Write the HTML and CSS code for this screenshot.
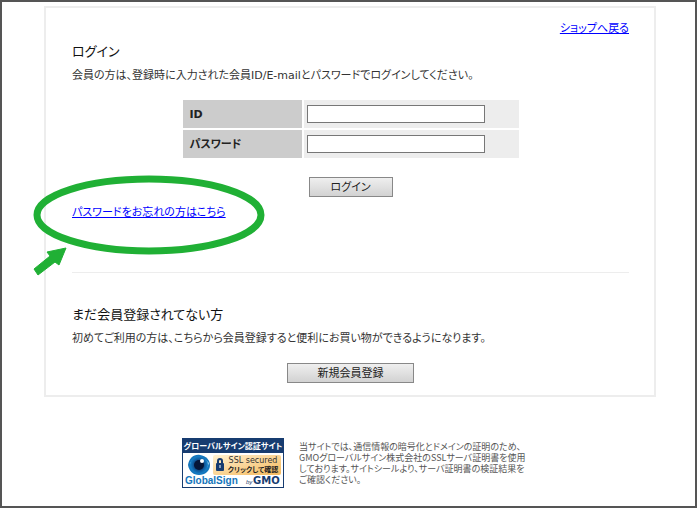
FILE: index.html
```html
<!DOCTYPE html>
<html lang="ja">
<head>
<meta charset="utf-8">
<title>ログイン</title>
<link rel="stylesheet" href="styles.css">
</head>
<body>
<div class="page">
  <main class="card">
    <nav class="back"><a href="#">ショップへ戻る</a></nav>
    <section class="login">
      <h1>ログイン</h1>
      <p>会員の方は、登録時に入力された会員ID/E-mailとパスワードでログインしてください。</p>
      <form>
        <table class="fields">
          <tr>
            <th scope="row"><label for="user">ID</label></th>
            <td><input id="user" type="text"></td>
          </tr>
          <tr>
            <th scope="row"><label for="pass">パスワード</label></th>
            <td><input id="pass" type="password"></td>
          </tr>
        </table>
        <button class="btn" type="button">ログイン</button>
      </form>
      <div class="forgot">
        <a href="#">パスワードをお忘れの方はこちら</a>
        <svg class="callout" width="234" height="104" viewBox="0 0 234 104" aria-hidden="true">
          <ellipse cx="117" cy="42" rx="112" ry="36" fill="none" stroke="#20b035" stroke-width="7"/>
          <path d="M34 75 15 79 18 83 2 96 6 102 23 89 27 92Z" fill="#20b035" stroke="#20b035"/>
        </svg>
      </div>
    </section>
    <section class="signup">
      <h2>まだ会員登録されてない方</h2>
      <p>初めてご利用の方は、こちらから会員登録すると便利にお買い物ができるようになります。</p>
      <button class="btn btn-wide" type="button">新規会員登録</button>
    </section>
  </main>
  <footer class="seal">
    <a href="#" aria-label="GlobalSign">
      <svg class="badge" width="102" height="50" viewBox="0 0 102 50">
        <defs>
          <linearGradient id="gold" x1="0" y1="0" x2="1" y2="1">
            <stop offset="0" stop-color="#fff1d2"/>
            <stop offset="1" stop-color="#f5b95b"/>
          </linearGradient>
          <radialGradient id="iris">
            <stop offset="0" stop-color="#071c44"/>
            <stop offset=".4" stop-color="#0b3c78"/>
            <stop offset="1" stop-color="#1682cc"/>
          </radialGradient>
        </defs>
        <rect x=".5" y=".5" width="101" height="49" fill="#fff" stroke="#173c70"/>
        <rect width="102" height="15" fill="#173c70"/>
        <text class="badge-title" x="51" y="11" text-anchor="middle">グローバルサイン認証サイト</text>
        <path d="M6 27C7 20 12 16 18 17 24 18 28 22 28 27 28 33 23 37 17 37 11 37 7 33 6 27Z" fill="#1475bb"/>
        <path d="M8 25C12 19 21 18 27 25 25 32 20 35 14 33 11 31 9 28 8 25Z" fill="#9fd0ec"/>
        <circle cx="17" cy="27" r="9" fill="url(#iris)"/>
        <circle cx="17" cy="27" r="5" fill="#061638"/>
        <circle cx="20" cy="23" r="2" fill="#fff"/>
        <rect x="31" y="17" width="68" height="20" rx="2" fill="url(#gold)"/>
        <path d="M36 26v-3a2 2 0 0 1 4 0v3" fill="none" stroke="#173c70" stroke-width="2"/>
        <rect x="34" y="25" width="8" height="8" rx="1" fill="#173c70"/>
        <path d="M38 27v3" stroke="#fff"/>
        <text class="badge-ssl" x="71" y="25" text-anchor="middle">SSL secured</text>
        <text class="badge-click" x="71" y="34" text-anchor="middle">クリックして確認</text>
        <text class="badge-brand" x="3" y="46">GlobalSign</text>
        <text class="badge-by" x="64" y="46">by</text>
        <text class="badge-gmo" x="71" y="46">GMO</text>
      </svg>
    </a>
    <p>当サイトでは、通信情報の暗号化とドメインの証明のため、<br>GMOグローバルサイン株式会社のSSLサーバ証明書を使用<br>しております。サイトシールより、サーバ証明書の検証結果を<br>ご確認ください。</p>
  </footer>
</div>
</body>
</html>
```
FILE: styles.css
```css
* { box-sizing: border-box; }

body {
  margin: 0;
  background: #fff;
  color: #333;
  font: 11px/16px "DejaVu Sans", "Noto Sans CJK JP", sans-serif;
  font-feature-settings: "palt";
}

.page {
  min-height: 100vh;
  padding: 4px 39px 16px 42px;
  border: 2px solid #555;
}

.card {
  padding: 13px 25px 12px 26px;
  border: 2px solid #ededed;
}

h1, h2, p { margin: 0; }

h1, h2 {
  color: #111;
  font-size: 13px;
  font-weight: 400;
  line-height: 20px;
}

a { color: #00f; }

.back { text-align: right; }

.login {
  padding: 5px 0 51px;
  border-bottom: 1px solid #ededed;
}

.login p, .signup p { margin-top: 6px; }

.fields {
  width: 340px;
  margin: 14px auto 17px;
  border-spacing: 2px;
}

.fields th {
  width: 119px;
  height: 28px;
  padding: 2px 7px 0;
  background: #ccc;
  color: #222;
  font-weight: 700;
  text-align: left;
}

.fields td {
  padding: 0 3px;
  background: #ededed;
}

.fields input {
  display: block;
  width: 178px;
  height: 18px;
  padding: 0 2px;
  border: 1px solid #777;
  background: #fff;
  font: inherit;
}

.btn {
  display: block;
  width: 84px;
  height: 20px;
  margin: 0 auto;
  padding: 2px 0 0;
  border: 1px solid #888;
  background: linear-gradient(#efefef, #d2d2d2);
  color: #222;
  font: inherit;
  line-height: 16px;
  font-feature-settings: inherit;
}

.btn-wide {
  width: 127px;
  margin-top: 16px;
}

.forgot {
  position: relative;
  width: fit-content;
  margin-top: 8px;
}

.callout {
  position: absolute;
  top: -32px;
  left: -40px;
  pointer-events: none;
}

.signup { padding-top: 32px; }

.seal {
  display: flex;
  align-items: center;
  gap: 15px;
  width: 336px;
  margin: 41px auto 0;
}

.seal p {
  color: #555;
  font-family: "Noto Sans CJK JP", sans-serif;
  font-size: 9px;
  line-height: 11px;
  white-space: nowrap;
}

.badge { display: block; }

.badge-title, .badge-click { font-family: "Noto Sans CJK JP", sans-serif; font-weight: 700; }
.badge-title { fill: #fff; font-size: 8px; }
.badge-click { fill: #222; font-size: 7px; }
.badge-ssl { fill: #333; font: 8px "DejaVu Sans", sans-serif; }
.badge-brand { fill: #1475bb; font: 700 10px "Liberation Sans", sans-serif; }
.badge-by { fill: #173c70; font: italic 6px "Liberation Sans", sans-serif; }
.badge-gmo { fill: #173c70; font: 700 10px "DejaVu Sans", sans-serif; }
```
